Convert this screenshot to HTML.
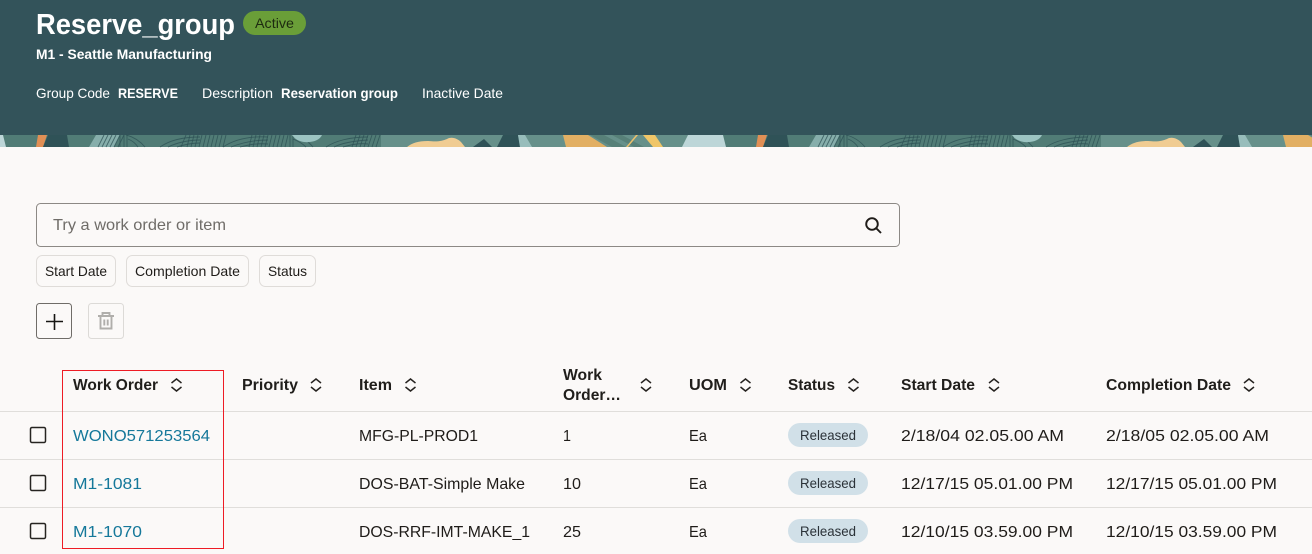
<!DOCTYPE html>
<html lang="en">
<head>
<meta charset="utf-8">
<title>Reserve_group</title>
<style>
html,body{margin:0;padding:0;background:#fbf9f8;width:1312px;height:554px;overflow:hidden}
svg{display:block}
text{font-family:"Liberation Sans",Arial,sans-serif;font-size:16px;fill:#1f1c19}
.h{fill:#fff;font-size:14px}
.b{font-weight:bold}
.th{font-weight:bold;font-size:16px;fill:#201e1b}
.chip{font-size:14px}
.lnk{fill:#15789a}
.rel{font-size:14px;fill:#2b3238}
.sort{fill:none;stroke:#25221f;stroke-width:1.5}
</style>
</head>
<body>
<svg xmlns="http://www.w3.org/2000/svg" width="1312" height="554" viewBox="0 0 1312 554">
<defs>
<g id="tile">
<rect x="0" y="135" width="381" height="12" fill="#517c76"/>
<rect x="381" y="135" width="339" height="12" fill="#66908a"/>
<polygon points="0,135 3,135 6,147 0,147" fill="#bdd6d8"/>
<polygon points="38,135 47,135 43,147 36,147" fill="#e08f55"/>
<polygon points="48,135 67,135 69,147 43,147" fill="#2f5257"/>
<polygon points="96,135 120,135 114,147 89,147" fill="#86aeab"/>
<g fill="none" stroke="#2c5054" stroke-width="0.9" stroke-opacity="0.75">
<path d="M98,147L104,135M102,147L108,135M106,147L112,135M110,147L116,135M114,147L120,135M118,147L124,135"/>
<path d="M120,135V147M124,135V147M127,135V147"/>
<path d="M126,135C134,137 140,141 145,147M128,139C133,141 136,144 138,147"/>
<path d="M160,147C170,140 185,137 200,137M168,147C176,143 188,140 200,140M177,147C183,145 190,143 200,143"/>
<path d="M186,135L181,147M190,135L187,147M194,135L191,147M198,135L195,147M202,135L199,147M206,135L203,147M210,135L207,147M214,135L211,147M218,135L215,147M222,135L219,147M226,135L223,147"/>
<path d="M223,147C235,139 250,136 268,137M231,147C241,143 252,140 268,140M240,147C248,145 256,143 268,144"/>
<path d="M252,135L249,147M256,135L253,147M260,135L257,147M264,135L261,147M268,135L265,147M272,135L269,147M276,135L273,147M280,135L277,147M284,135L281,147M288,135L285,147"/>
<path d="M290,135V147M293,135V147"/>
<path d="M293,135C302,137 308,141 313,147M293,139C298,141 303,144 306,147"/>
<path d="M326,147C335,141 350,137 368,137M334,147C342,143 352,141 368,140M343,147C350,145 358,143 368,144"/>
<path d="M356,135L352,147M360,135L356,147M364,135L360,147M368,135L364,147M372,135L368,147M376,135L372,147M380,135L376,147"/>
</g>
<path d="M292,135H322C320,140 312,143 304,142C298,141 295,139 292,135Z" fill="#9cc4c2"/>
<path d="M407,147C412,143 418,141 428,141C438,142 442,141 447,139C452,136 458,139 461,142L465,147Z" fill="#f0cc92"/>
<polygon points="473,147 484,139 492,147" fill="#2f5257"/>
<polygon points="503,135 518,135 520,147 497,147" fill="#2f5257"/>
<polygon points="518,135 525,135 532,147 520,147" fill="#97bdbb"/>
<polygon points="563,135 588,135 607,147 566,147" fill="#e2af63"/>
<polygon points="590,135 604,135 626,147 612,147" fill="#578078"/>
<polygon points="612,135 622,135 644,147 634,147" fill="#578078"/>
<polygon points="636,135 638,135 628,147 626,147" fill="#ecc06c"/>
<polygon points="643,135 655,135 663,147 653,147" fill="#f0c668"/>
<polygon points="688,135 720,135 720,147 682,147" fill="#bdd6d8"/>
<polygon points="720,135 723,135 726,147 720,147" fill="#bdd6d8"/>
</g>
<g id="so"><path class="sort" d="M-5,-1.5L0,-5.5L5,-1.5M-5,2.5L0,6.5L5,2.5"/></g>
<g id="cb"><rect x="-7.5" y="-7.5" width="15" height="15" rx="1.5" fill="none" stroke="#262421" stroke-width="1.5"/></g>
</defs>

<rect width="1312" height="554" fill="#fbf9f8"/>
<rect width="1312" height="147" fill="#33535a"/>
<use href="#tile"/>
<use href="#tile" x="720"/>

<text x="36" y="34" class="b" style="font-size:29px;fill:#fff" textLength="199" lengthAdjust="spacingAndGlyphs">Reserve_group</text>
<rect x="243" y="11" width="63" height="24" rx="12" fill="#6a9e38"/>
<text x="255" y="28" style="font-size:14px;fill:#1d2a10" textLength="39" lengthAdjust="spacingAndGlyphs">Active</text>
<text x="36" y="59" class="h b" textLength="176" lengthAdjust="spacingAndGlyphs">M1 - Seattle Manufacturing</text>
<text x="36" y="98" class="h" textLength="74" lengthAdjust="spacingAndGlyphs">Group Code</text>
<text x="118" y="98" class="h b" textLength="60" lengthAdjust="spacingAndGlyphs">RESERVE</text>
<text x="202" y="98" class="h" textLength="71" lengthAdjust="spacingAndGlyphs">Description</text>
<text x="281" y="98" class="h b" textLength="117" lengthAdjust="spacingAndGlyphs">Reservation group</text>
<text x="422" y="98" class="h" textLength="81" lengthAdjust="spacingAndGlyphs">Inactive Date</text>

<rect x="36.5" y="203.5" width="863" height="43" rx="4" fill="#fbf9f8" stroke="#8c8985"/>
<text x="53" y="230" style="fill:#6f6c68" textLength="173" lengthAdjust="spacingAndGlyphs">Try a work order or item</text>
<circle cx="872" cy="224" r="5.8" fill="none" stroke="#1f1c19" stroke-width="1.9"/>
<path d="M876.2,228.2L881,233" fill="none" stroke="#1f1c19" stroke-width="1.9"/>

<rect x="36.5" y="255.5" width="79" height="31" rx="6" fill="#fbf9f8" stroke="#dfdcd9"/>
<text x="45" y="276" class="chip" textLength="62" lengthAdjust="spacingAndGlyphs">Start Date</text>
<rect x="126.5" y="255.5" width="122" height="31" rx="6" fill="#fbf9f8" stroke="#dfdcd9"/>
<text x="135" y="276" class="chip" textLength="105" lengthAdjust="spacingAndGlyphs">Completion Date</text>
<rect x="259.5" y="255.5" width="56" height="31" rx="6" fill="#fbf9f8" stroke="#dfdcd9"/>
<text x="268" y="276" class="chip" textLength="39" lengthAdjust="spacingAndGlyphs">Status</text>

<rect x="36.5" y="303.5" width="35" height="35" rx="3" fill="#fbf9f8" stroke="#6f6c68"/>
<path d="M46,321.5H63M54.5,314V330" stroke="#161513" stroke-width="1.6" fill="none"/>
<rect x="88.5" y="303.5" width="35" height="35" rx="3" fill="#fbf9f8" stroke="#dcdad7"/>
<path d="M98,316H114M102.5,315.5V313H109.5V315.5M100.5,316V328.5H111.5V316M104.3,319.5V325.5M107.7,319.5V325.5" fill="none" stroke="#b0aeab" stroke-width="1.9"/>

<text x="73" y="390" class="th" textLength="85" lengthAdjust="spacingAndGlyphs">Work Order</text>
<use href="#so" x="176.5" y="384.5"/>
<text x="242" y="390" class="th" textLength="56" lengthAdjust="spacingAndGlyphs">Priority</text>
<use href="#so" x="316" y="384.5"/>
<text x="359" y="390" class="th" textLength="33" lengthAdjust="spacingAndGlyphs">Item</text>
<use href="#so" x="410.5" y="384.5"/>
<text x="563" y="380" class="th" textLength="39" lengthAdjust="spacingAndGlyphs">Work</text>
<text x="563" y="400" class="th" textLength="58" lengthAdjust="spacingAndGlyphs">Order…</text>
<use href="#so" x="646" y="384.5"/>
<text x="689" y="390" class="th" textLength="38" lengthAdjust="spacingAndGlyphs">UOM</text>
<use href="#so" x="745.5" y="384.5"/>
<text x="788" y="390" class="th" textLength="47" lengthAdjust="spacingAndGlyphs">Status</text>
<use href="#so" x="853.5" y="384.5"/>
<text x="901" y="390" class="th" textLength="74" lengthAdjust="spacingAndGlyphs">Start Date</text>
<use href="#so" x="994" y="384.5"/>
<text x="1106" y="390" class="th" textLength="125" lengthAdjust="spacingAndGlyphs">Completion Date</text>
<use href="#so" x="1249" y="384.5"/>

<path d="M0,411.5H1312M0,459.5H1312M0,507.5H1312" stroke="#e0dedb" fill="none"/>

<use href="#cb" x="38" y="435"/>
<text x="73" y="441" class="lnk" textLength="137" lengthAdjust="spacingAndGlyphs">WONO571253564</text>
<text x="359" y="441" textLength="119" lengthAdjust="spacingAndGlyphs">MFG-PL-PROD1</text>
<text x="563" y="441" textLength="8" lengthAdjust="spacingAndGlyphs">1</text>
<text x="689" y="441" textLength="18" lengthAdjust="spacingAndGlyphs">Ea</text>
<rect x="788" y="423" width="80" height="24" rx="12" fill="#d1e0e8"/>
<text x="800" y="440" class="rel" textLength="56" lengthAdjust="spacingAndGlyphs">Released</text>
<text x="901" y="441" textLength="163" lengthAdjust="spacingAndGlyphs">2/18/04 02.05.00 AM</text>
<text x="1106" y="441" textLength="163" lengthAdjust="spacingAndGlyphs">2/18/05 02.05.00 AM</text>

<use href="#cb" x="38" y="483"/>
<text x="73" y="489" class="lnk" textLength="69" lengthAdjust="spacingAndGlyphs">M1-1081</text>
<text x="359" y="489" textLength="166" lengthAdjust="spacingAndGlyphs">DOS-BAT-Simple Make</text>
<text x="563" y="489" textLength="18" lengthAdjust="spacingAndGlyphs">10</text>
<text x="689" y="489" textLength="18" lengthAdjust="spacingAndGlyphs">Ea</text>
<rect x="788" y="471" width="80" height="24" rx="12" fill="#d1e0e8"/>
<text x="800" y="488" class="rel" textLength="56" lengthAdjust="spacingAndGlyphs">Released</text>
<text x="901" y="489" textLength="172" lengthAdjust="spacingAndGlyphs">12/17/15 05.01.00 PM</text>
<text x="1106" y="489" textLength="171" lengthAdjust="spacingAndGlyphs">12/17/15 05.01.00 PM</text>

<use href="#cb" x="38" y="531"/>
<text x="73" y="537" class="lnk" textLength="69" lengthAdjust="spacingAndGlyphs">M1-1070</text>
<text x="359" y="537" textLength="171" lengthAdjust="spacingAndGlyphs">DOS-RRF-IMT-MAKE_1</text>
<text x="563" y="537" textLength="18" lengthAdjust="spacingAndGlyphs">25</text>
<text x="689" y="537" textLength="18" lengthAdjust="spacingAndGlyphs">Ea</text>
<rect x="788" y="519" width="80" height="24" rx="12" fill="#d1e0e8"/>
<text x="800" y="536" class="rel" textLength="56" lengthAdjust="spacingAndGlyphs">Released</text>
<text x="901" y="537" textLength="172" lengthAdjust="spacingAndGlyphs">12/10/15 03.59.00 PM</text>
<text x="1106" y="537" textLength="171" lengthAdjust="spacingAndGlyphs">12/10/15 03.59.00 PM</text>

<rect x="62.5" y="370.5" width="161" height="178" fill="none" stroke="#ee1c25" stroke-width="1"/>
</svg>
</body>
</html>
